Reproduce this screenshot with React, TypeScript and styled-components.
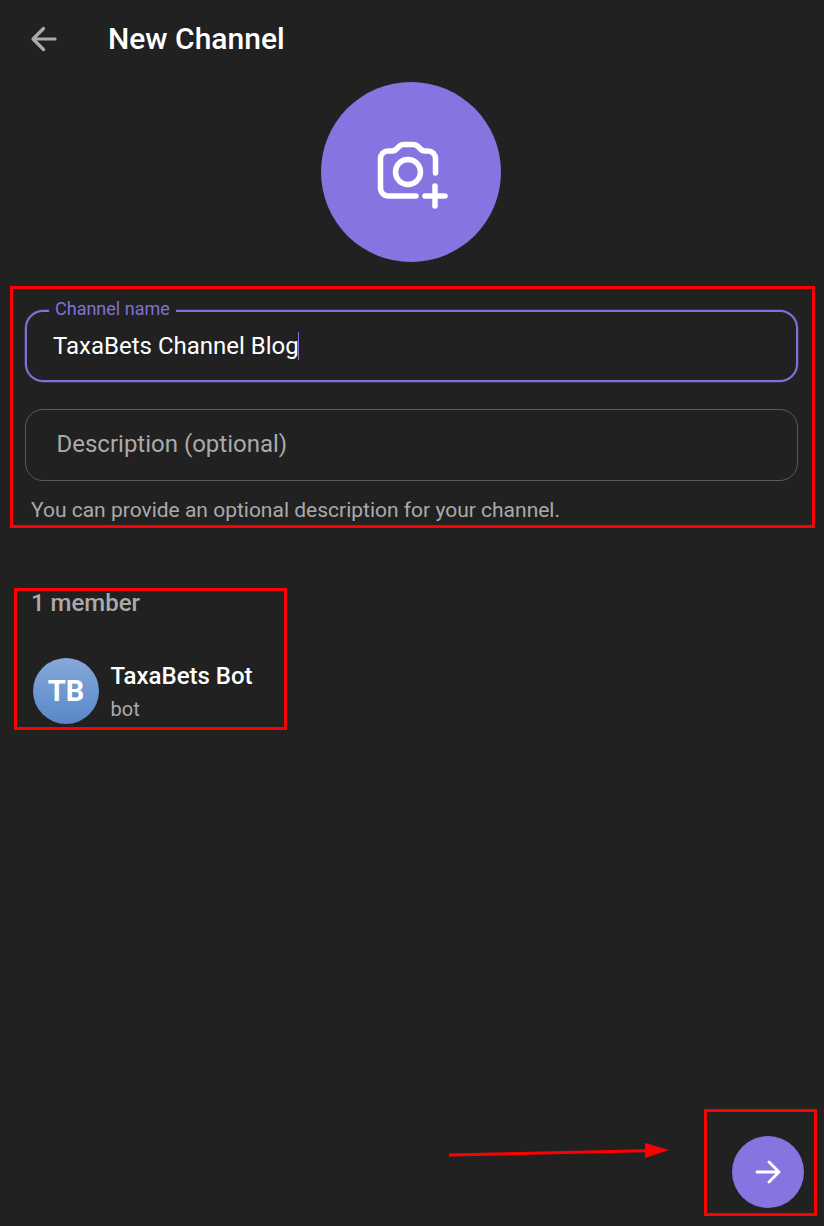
import React from "react";
import styled, { createGlobalStyle } from "styled-components";

const GlobalStyle = createGlobalStyle`
  html, body {
    margin: 0;
    padding: 0;
    background: #212121;
  }
  * {
    box-sizing: border-box;
  }
`;

const Page = styled.div`
  position: relative;
  width: 824px;
  height: 1226px;
  display: flex;
  flex-direction: column;
  background: #212121;
  font-family: Roboto, "Liberation Sans", sans-serif;
  overflow: hidden;
`;

const Header = styled.header`
  height: 78px;
  flex: none;
  display: flex;
  align-items: center;
  padding-left: 24px;
  gap: 44px;
`;

const BackButton = styled.button`
  width: 40px;
  height: 40px;
  padding: 0;
  border: 0;
  background: none;
  display: flex;
  align-items: center;
  justify-content: center;
  color: #aaaaaa;
`;

const Title = styled.h1`
  margin: 0;
  font-size: 30px;
  font-weight: 500;
  line-height: 36px;
  color: #ffffff;
`;

const AvatarPicker = styled.div`
  width: 180px;
  height: 180px;
  flex: none;
  margin: 4px 0 0 321px;
  border-radius: 50%;
  background: #8774e1;
  display: flex;
  align-items: center;
  justify-content: center;
  color: #ffffff;
`;

const Form = styled.section`
  margin-top: 48px;
  padding: 0 26px 0 25px;
  display: flex;
  flex-direction: column;
`;

const Field = styled.div<{ $active?: boolean }>`
  position: relative;
  height: 72px;
  display: flex;
  align-items: center;
  border-radius: 18px;
  border: ${(p) => (p.$active ? "2px solid #8070d8" : "1px solid #5b5b5a")};
  box-shadow: ${(p) => (p.$active ? "0 0 0 0.5px rgba(128, 112, 216, 0.5)" : "none")};
  padding-left: ${(p) => (p.$active ? "26px" : "30.5px")};
`;

const FieldLabel = styled.span`
  position: absolute;
  top: -13px;
  left: 22px;
  padding: 0 6px;
  background: #212121;
  color: #8070d8;
  font-size: 18px;
  line-height: 20px;
`;

const FieldValue = styled.span`
  display: flex;
  align-items: center;
  color: #ffffff;
  font-size: 24px;
  line-height: 30px;
`;

const Caret = styled.span`
  width: 1px;
  height: 28px;
  margin-left: -1px;
  background: #8070d8;
`;

const Placeholder = styled.span`
  margin-top: -2px;
  color: #aaaaaa;
  font-size: 24px;
  line-height: 30px;
`;

const Gap = styled.div`
  height: 27px;
`;

const Hint = styled.p`
  margin: 17px 0 0 6px;
  color: #aaaaaa;
  font-size: 21px;
  line-height: 24px;
`;

const MembersTitle = styled.h2`
  margin: 66px 0 0 31px;
  color: #aaaaaa;
  font-size: 24px;
  font-weight: 500;
  line-height: 30px;
`;

const MemberRow = styled.div`
  margin: 39px 0 0 33px;
  display: flex;
  align-items: center;
  gap: 11.5px;
`;

const MemberAvatar = styled.div`
  width: 66px;
  height: 66px;
  border-radius: 50%;
  background: linear-gradient(#85a9d9, #5987ca);
  display: flex;
  align-items: center;
  justify-content: center;
  color: #ffffff;
  font-size: 29px;
  font-weight: 700;
`;

const MemberInfo = styled.div`
  display: flex;
  flex-direction: column;
`;

const MemberName = styled.span`
  margin-top: 1px;
  color: #ffffff;
  font-size: 24px;
  font-weight: 500;
  line-height: 36px;
`;

const MemberStatus = styled.span`
  color: #aaaaaa;
  font-size: 20px;
  line-height: 31px;
`;

const Fab = styled.button`
  width: 72px;
  height: 72px;
  margin: auto 20px 18px auto;
  padding: 0;
  border: 0;
  border-radius: 50%;
  background: #8774e1;
  display: flex;
  align-items: center;
  justify-content: center;
  color: #ffffff;
`;

/* red annotations drawn on top of the screenshot */
const Mark = styled.div<{ $x: number; $y: number; $w: number; $h: number }>`
  position: absolute;
  left: ${(p) => p.$x}px;
  top: ${(p) => p.$y}px;
  width: ${(p) => p.$w}px;
  height: ${(p) => p.$h}px;
  border: 3px solid #ff0000;
  pointer-events: none;
`;

const MarkArrow = styled.svg`
  position: absolute;
  left: 440px;
  top: 1130px;
`;

const App: React.FC = () => {
  return (
    <Page>
      <GlobalStyle />
      <Header>
        <BackButton aria-label="Back">
          <svg width="30" height="30" viewBox="0 0 30 30" fill="none" stroke="currentColor" strokeWidth="3.2" strokeLinecap="round" strokeLinejoin="round">
            <path d="M26 15H4.500M14.500 4.500L4 15L14.500 25.500" />
          </svg>
        </BackButton>
        <Title>New Channel</Title>
      </Header>

      <AvatarPicker>
        <svg width="80" height="80" viewBox="0 0 80 80" fill="none" stroke="currentColor" strokeWidth="5.500" strokeLinecap="round" strokeLinejoin="round">
          <path d="M45 64H17a7.500 7.500 0 0 1-7.500-7.500V26.500A7.500 7.500 0 0 1 17 19h4q3 0 5-2.500l1-1q2.500-3 6-3h9q3.500 0 6 3l1 1q2 2.500 5 2.500h3a7.500 7.500 0 0 1 7.500 7.500V41" />
          <circle cx="37" cy="40" r="12.500" />
          <path d="M54 64H74M64 54V74" />
        </svg>
      </AvatarPicker>

      <Form>
        <Field $active>
          <FieldLabel>Channel name</FieldLabel>
          <FieldValue>
            TaxaBets Channel Blog
            <Caret />
          </FieldValue>
        </Field>
        <Gap />
        <Field>
          <Placeholder>Description (optional)</Placeholder>
        </Field>
        <Hint>You can provide an optional description for your channel.</Hint>
      </Form>

      <MembersTitle>1 member</MembersTitle>
      <MemberRow>
        <MemberAvatar>TB</MemberAvatar>
        <MemberInfo>
          <MemberName>TaxaBets Bot</MemberName>
          <MemberStatus>bot</MemberStatus>
        </MemberInfo>
      </MemberRow>

      <Fab aria-label="Next">
        <svg width="32" height="32" viewBox="0 0 32 32" fill="none" stroke="currentColor" strokeWidth="2.800" strokeLinecap="round" strokeLinejoin="round">
          <path d="M5 16H27M17 6L27 16L17 26" />
        </svg>
      </Fab>

      <Mark $x={10} $y={286} $w={805} $h={242} />
      <Mark $x={14} $y={588} $w={273} $h={142} />
      <Mark $x={704} $y={1109} $w={113} $h={107} />
      <MarkArrow width="240" height="40" viewBox="0 0 240 40">
        <path d="M9 25L216 20.500" stroke="#ff0000" strokeWidth="3" />
        <path d="M205 13L229 20L205 28Z" fill="#ff0000" />
      </MarkArrow>
    </Page>
  );
};

export default App;
